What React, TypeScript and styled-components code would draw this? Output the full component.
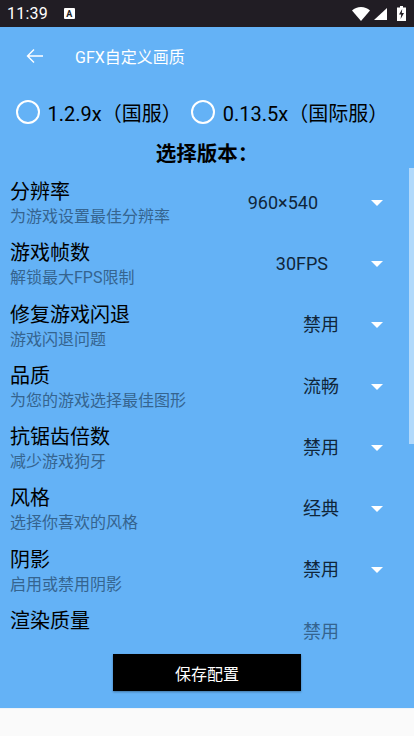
import React from 'react';
import styled, { createGlobalStyle } from 'styled-components';

interface ISetting {
  title: string;
  desc: string;
  value: string;
  inset: number;
}

const settings: ISetting[] = [
  { title: '分辨率', desc: '为游戏设置最佳分辨率', value: '960×540', inset: 53 },
  { title: '游戏帧数', desc: '解锁最大FPS限制', value: '30FPS', inset: 43 },
  { title: '修复游戏闪退', desc: '游戏闪退问题', value: '禁用', inset: 32 },
  { title: '品质', desc: '为您的游戏选择最佳图形', value: '流畅', inset: 32 },
  { title: '抗锯齿倍数', desc: '减少游戏狗牙', value: '禁用', inset: 32 },
  { title: '风格', desc: '选择你喜欢的风格', value: '经典', inset: 32 },
  { title: '阴影', desc: '启用或禁用阴影', value: '禁用', inset: 32 },
];

export default function App() {
  return (
    <Screen>
      <GlobalStyle />
      <StatusBar>
        <Clock>11:39</Clock>
        <NoticeIcon>A</NoticeIcon>
        <StatusIcons>
          <svg width="18" height="14" viewBox="0 0 18 14">
            <path d="M0 3.6C2.4 1.3 5.5 0 9 0s6.6 1.3 9 3.6L9 14z" fill="#fff" />
          </svg>
          <svg width="14" height="14" viewBox="0 0 14 14">
            <path d="M13 1v12H0z" fill="#fff" />
          </svg>
          <svg width="9" height="15" viewBox="0 0 9 15">
            <path d="M3 0h3v1.5h3V15H0V1.500h3z" fill="#fff" />
            <path d="M5.200 3 2 8.500h2.200L3.600 13 7 7H4.800z" fill="#211d24" />
          </svg>
        </StatusIcons>
      </StatusBar>
      <AppBar>
        <svg width="18" height="16" viewBox="0 0 18 16">
          <path d="M17 8H2M8 1.500 1.500 8 8 14.500" fill="none" stroke="#fff" strokeWidth="1.400" />
        </svg>
        <AppBarTitle>GFX自定义画质</AppBarTitle>
      </AppBar>
      <RadioRow>
        <RadioOption>
          <RadioCircle />
          1.2.9x（国服）
        </RadioOption>
        <RadioOption>
          <RadioCircle />
          0.13.5x（国际服）
        </RadioOption>
      </RadioRow>
      <SectionTitle>选择版本：</SectionTitle>
      <ListFrame>
        <ScrollThumb />
        {settings.map((setting) => (
          <SettingRow key={setting.title}>
            <SettingText>
              <SettingTitle>{setting.title}</SettingTitle>
              <SettingDesc>{setting.desc}</SettingDesc>
            </SettingText>
            <SettingValue $inset={setting.inset}>{setting.value}</SettingValue>
            <Caret />
          </SettingRow>
        ))}
        <SettingRow>
          <SettingText>
            <SettingTitle>渲染质量</SettingTitle>
          </SettingText>
          <SettingValue $inset={32} $muted>
            禁用
          </SettingValue>
          <CaretSpace />
        </SettingRow>
      </ListFrame>
      <ButtonArea>
        <SaveButton>保存配置</SaveButton>
      </ButtonArea>
      <BottomStrip />
    </Screen>
  );
}

const GlobalStyle = createGlobalStyle`
  html, body {
    margin: 0;
    padding: 0;
    background: #fafafa;
  }
  * {
    box-sizing: border-box;
  }
`;

const Screen = styled.div`
  display: flex;
  flex-direction: column;
  width: 414px;
  height: 736px;
  overflow: hidden;
  background: #64b2f6;
  color: #000;
  font-family: Roboto, 'Noto Sans CJK SC', sans-serif;
`;

const StatusBar = styled.div`
  display: flex;
  align-items: center;
  flex: 0 0 27px;
  padding: 0 8px 0 7px;
  background: #211d24;
  color: #fff;
`;

const Clock = styled.span`
  font-size: 16px;
  letter-spacing: 0.2px;
`;

const NoticeIcon = styled.span`
  display: flex;
  align-items: center;
  justify-content: center;
  width: 11px;
  height: 11px;
  margin-left: 16px;
  border-radius: 1px;
  background: #fff;
  color: #211d24;
  font-size: 9px;
  font-weight: 700;
`;

const StatusIcons = styled.div`
  display: flex;
  align-items: center;
  gap: 4px;
  margin-left: auto;

  svg:last-child {
    margin-left: 5px;
  }
`;

const AppBar = styled.div`
  display: flex;
  align-items: center;
  flex: 0 0 57px;
  padding-left: 26px;
  color: #fff;
`;

const AppBarTitle = styled.span`
  margin-left: 31px;
  font-size: 16px;
`;

const RadioRow = styled.div`
  display: flex;
  align-items: center;
  gap: 9.500px;
  height: 56px;
  padding-left: 16px;
`;

const RadioOption = styled.div`
  display: flex;
  align-items: center;
  gap: 7.500px;
  font-size: 20px;
  white-space: nowrap;
`;

const RadioCircle = styled.span`
  width: 24px;
  height: 24px;
  border: 2.500px solid #fff;
  border-radius: 50%;
`;

const SectionTitle = styled.div`
  height: 28px;
  font-size: 20.500px;
  font-weight: 700;
  line-height: 29px;
  text-align: center;
`;

const ListFrame = styled.div`
  position: relative;
  flex: 0 0 473px;
  overflow: hidden;
  padding-top: 11px;
`;

const ScrollThumb = styled.div`
  position: absolute;
  top: 0;
  right: 0;
  width: 5px;
  height: 276px;
  background: rgba(255, 255, 255, 0.5);
`;

const SettingRow = styled.div`
  display: flex;
  align-items: center;
  height: 61.300px;
  padding: 0 31px 14px 10px;
`;

const SettingText = styled.div`
  display: flex;
  flex: 1;
  flex-direction: column;
  align-self: flex-start;
`;

const SettingTitle = styled.div`
  font-size: 20px;
  line-height: 27px;
`;

const SettingDesc = styled.div`
  color: #35648f;
  font-size: 16px;
  line-height: 21px;
`;

const SettingValue = styled.div<{ $inset: number; $muted?: boolean }>`
  margin-right: ${(props) => props.$inset}px;
  color: ${(props) => (props.$muted ? '#35648f' : '#10263a')};
  font-size: 18px;
  line-height: 22px;
`;

const Caret = styled.div`
  width: 0;
  height: 0;
  border-top: 6px solid #fff;
  border-right: 6px solid transparent;
  border-left: 6px solid transparent;
`;

const CaretSpace = styled.div`
  width: 12px;
`;

const ButtonArea = styled.div`
  display: flex;
  flex: 1;
  justify-content: center;
  padding-top: 13px;
`;

const SaveButton = styled.div`
  display: flex;
  align-items: center;
  justify-content: center;
  width: 188px;
  height: 37px;
  background: #000;
  box-shadow: 0 1px 2px rgba(0, 0, 0, 0.35);
  color: #fff;
  font-size: 16px;
`;

const BottomStrip = styled.div`
  flex: 0 0 28px;
  border-top: 1px solid #eef3f8;
  background: #fafafa;
`;
